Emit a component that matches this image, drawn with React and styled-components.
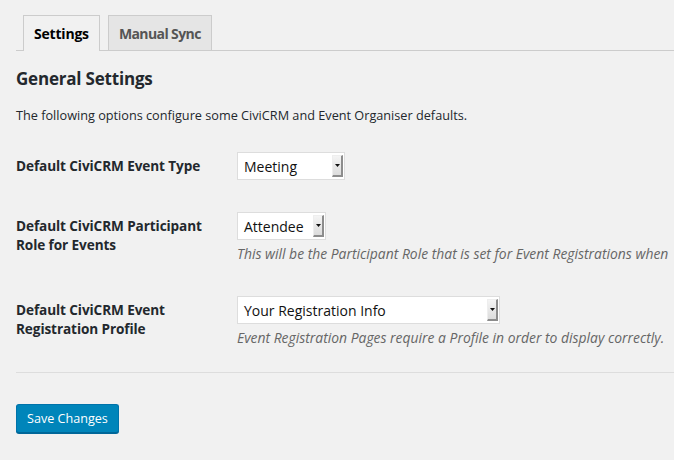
import React from "react";
import styled, { createGlobalStyle } from "styled-components";

const GlobalStyle = createGlobalStyle`
  html, body {
    margin: 0;
    padding: 0;
    background: #f1f1f1;
    overflow: hidden;
  }
  body {
    font-family: "Open Sans", "DejaVu Sans", sans-serif;
    color: #23282d;
  }
`;

const rows = [
  {
    label: "Default CiviCRM Event Type",
    value: "Meeting",
    width: 108,
  },
  {
    label: "Default CiviCRM Participant Role for Events",
    value: "Attendee",
    width: 89,
    desc: "This will be the Participant Role that is set for Event Registrations when",
  },
  {
    label: "Default CiviCRM Event Registration Profile",
    value: "Your Registration Info",
    width: 263,
    desc: "Event Registration Pages require a Profile in order to display correctly.",
  },
];

const App = () => {
  return (
    <Page>
      <GlobalStyle />
      <TabBar>
        <Tab active>Settings</Tab>
        <Tab>Manual Sync</Tab>
      </TabBar>
      <Heading>General Settings</Heading>
      <Intro>
        The following options configure some CiviCRM and Event Organiser
        defaults.
      </Intro>
      <FormTable>
        {rows.map((row) => (
          <Row key={row.label}>
            <Label>{row.label}</Label>
            <Field>
              <Select $width={row.width}>
                <SelectText>{row.value}</SelectText>
                <Arrow>
                  <svg width="5" height="3" viewBox="0 0 5 3">
                    <path d="M0 0 H5 L2.5 3 Z" fill="#111" />
                  </svg>
                </Arrow>
              </Select>
              {row.desc && <Description>{row.desc}</Description>}
            </Field>
          </Row>
        ))}
      </FormTable>
      <Divider />
      <SaveButton>Save Changes</SaveButton>
    </Page>
  );
};

const Page = styled.div`
  padding: 15px 0 20px 16px;
  min-height: 460px;
  box-sizing: border-box;
`;

const TabBar = styled.div`
  display: flex;
  gap: 8px;
  padding-left: 7px;
  border-bottom: 1px solid #ccc;
  height: 35px;
`;

const Tab = styled.div`
  display: flex;
  align-items: center;
  padding: 0 10px;
  box-sizing: border-box;
  border: 1px solid #ccc;
  border-bottom: none;
  font-size: 14px;
  font-weight: 700;
  letter-spacing: ${({ active }) => (active ? "-0.2px" : "-0.6px")};
  color: ${({ active }) => (active ? "#000" : "#555")};
  background: ${({ active }) => (active ? "#f1f1f1" : "#e5e5e5")};
  height: ${({ active }) => (active ? "36px" : "35px")};
`;

const Heading = styled.h2`
  margin: 16px 0 0;
  font-size: 17px;
  line-height: 24px;
  font-weight: 700;
  letter-spacing: -0.2px;
`;

const Intro = styled.p`
  margin: 14px 0 0;
  font-size: 12.7px;
  line-height: 20px;
`;

const FormTable = styled.div`
  margin-top: 11px;
`;

const Row = styled.div`
  display: grid;
  grid-template-columns: 221px 1fr;
  padding: 16px 0;
`;

const Label = styled.div`
  padding-top: 4px;
  padding-right: 10px;
  font-size: 13.6px;
  line-height: 19px;
  font-weight: 700;
  letter-spacing: -0.1px;
`;

const Field = styled.div`
  min-width: 0;
`;

const Select = styled.div`
  display: flex;
  align-items: stretch;
  width: ${({ $width }) => $width}px;
  height: 28px;
  box-sizing: border-box;
  background: #fff;
  border: 1px solid #ddd;
  padding: 2px 1px 2px 0;
`;

const SelectText = styled.span`
  flex: 1;
  display: flex;
  align-items: center;
  padding-left: 6px;
  font-size: 14px;
  color: #111;
`;

const Arrow = styled.span`
  width: 11px;
  display: flex;
  align-items: center;
  justify-content: center;
  box-sizing: border-box;
  background: linear-gradient(#f4f4f4, #dcdcdc);
  border-right: 2px solid #8c8c8c;
  border-bottom: 2px solid #8c8c8c;
  border-top: 1px solid #eee;
  border-left: 1px solid #eee;
`;

const Description = styled.p`
  margin: 4px 0 0;
  font-size: 13.9px;
  line-height: 20px;
  font-style: italic;
  color: #666;
  white-space: nowrap;
`;

const Divider = styled.hr`
  margin: 8px 0 0;
  border: none;
  border-top: 1px solid #ddd;
`;

const SaveButton = styled.button`
  display: block;
  margin-top: 31px;
  height: 29px;
  padding: 0 10px;
  font-family: "Open Sans", "DejaVu Sans", sans-serif;
  font-size: 12.6px;
  color: #fff;
  background: #0085ba;
  border: 1px solid #0073aa;
  border-bottom-color: #006799;
  border-radius: 3px;
  box-shadow: 0 1px 0 #006799;
  cursor: pointer;
`;

export default App;
